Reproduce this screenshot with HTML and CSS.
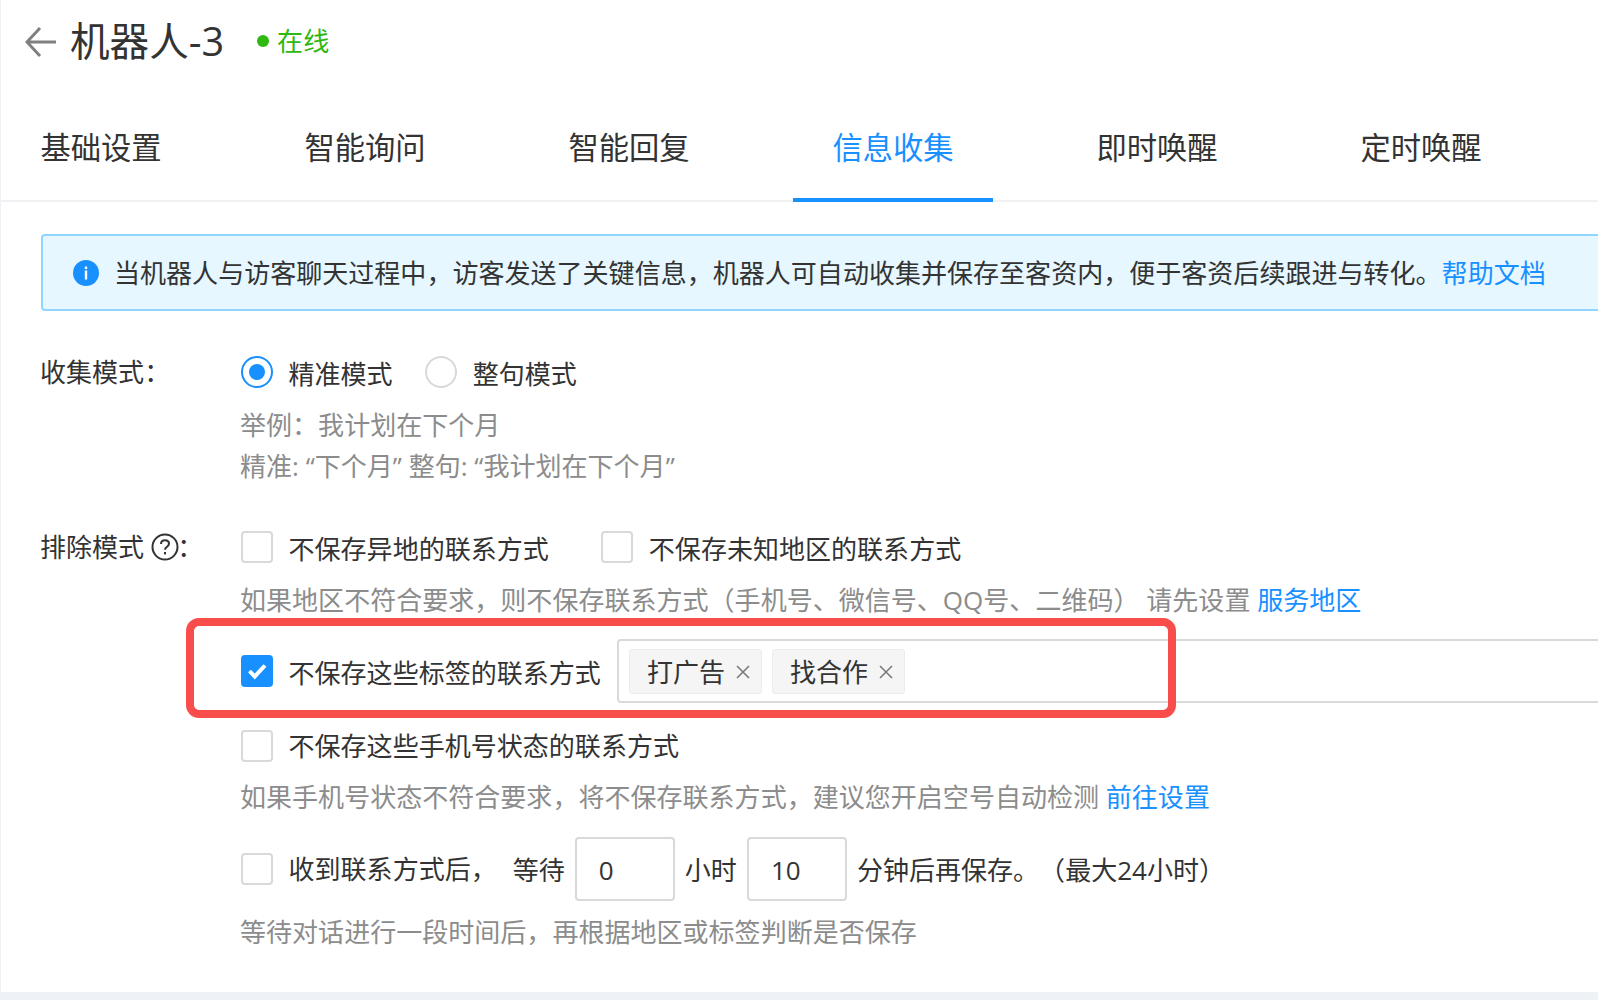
FILE: index.html
```html
<!DOCTYPE html>
<html lang="zh-CN">
<head>
<meta charset="utf-8">
<title>机器人-3</title>
<link rel="stylesheet" href="styles.css">
</head>
<body>
<div class="panel">
  <header class="head">
    <svg class="back" viewBox="0 0 32 32" width="32" height="32"><path d="M31 16H2M15 2 2 16l13 14" fill="none" stroke="#808080" stroke-width="3"/></svg>
    <h1 class="title">机器人-3</h1>
    <span class="status"><i class="dot"></i>在线</span>
  </header>
  <nav class="tabs">
    <a class="tab">基础设置</a>
    <a class="tab">智能询问</a>
    <a class="tab">智能回复</a>
    <a class="tab active">信息收集</a>
    <a class="tab">即时唤醒</a>
    <a class="tab">定时唤醒</a>
  </nav>
  <main class="body">
    <div class="alert">
      <svg class="info" viewBox="0 0 26 26" width="26" height="26"><circle cx="13" cy="13" r="13" fill="#1890ff"/><rect x="11.8" y="6.5" width="2.4" height="2.6" fill="#fff"/><rect x="11.8" y="10.5" width="2.4" height="9" fill="#fff"/></svg>
      <span>当机器人与访客聊天过程中，访客发送了关键信息，机器人可自动收集并保存至客资内，便于客资后续跟进与转化。<a class="link">帮助文档</a></span>
    </div>

    <section class="field first">
      <div class="label">收集模式：</div>
      <div class="content">
        <div class="line">
          <label class="opt low"><i class="radio on"></i>精准模式</label>
          <label class="opt low"><i class="radio"></i>整句模式</label>
        </div>
        <p class="hint hint-first">举例：我计划在下个月</p>
        <p class="hint">精准: “下个月” 整句: “我计划在下个月”</p>
      </div>
    </section>

    <section class="field second">
      <div class="label">排除模式
        <svg class="help" viewBox="0 0 28 28" width="28" height="28"><circle cx="14" cy="14" r="12.5" fill="none" stroke="#333" stroke-width="2"/><path d="M10 11c0-2.300 1.700-3.700 4-3.700s4 1.400 4 3.500c0 3-4 3-4 6" fill="none" stroke="#333" stroke-width="2"/><rect x="13" y="19" width="2" height="2.400" fill="#333"/></svg>：</div>
      <div class="content">
        <div class="line">
          <label class="opt low gap-wide"><i class="check"></i>不保存异地的联系方式</label>
          <label class="opt low"><i class="check"></i>不保存未知地区的联系方式</label>
        </div>
        <p class="hint hint-first">如果地区不符合要求，则不保存联系方式（手机号、微信号、QQ号、二维码） 请先设置 <a class="link">服务地区</a></p>
        <div class="line tag-line">
          <label class="opt low"><i class="check on"><svg viewBox="0 0 32 32" width="32" height="32"><path d="M8.500 16l5.200 5.500L24 10.500" fill="none" stroke="#fff" stroke-width="4"/></svg></i>不保存这些标签的联系方式</label>
          <div class="tag-input">
            <span class="tag">打广告<svg class="x" viewBox="0 0 14 14" width="14" height="14"><path d="M1 1l12 12M13 1 1 13" stroke="#777" stroke-width="1.500"/></svg></span>
            <span class="tag">找合作<svg class="x" viewBox="0 0 14 14" width="14" height="14"><path d="M1 1l12 12M13 1 1 13" stroke="#777" stroke-width="1.500"/></svg></span>
          </div>
        </div>
        <div class="line phone-line">
          <label class="opt"><i class="check"></i>不保存这些手机号状态的联系方式</label>
        </div>
        <p class="hint hint-phone">如果手机号状态不符合要求，将不保存联系方式，建议您开启空号自动检测 <a class="link">前往设置</a></p>
        <div class="line wait-line">
          <label class="opt"><i class="check"></i>收到联系方式后，</label>
          <span class="wait-text">等待</span>
          <input class="num" value="0">
          <span class="wait-text">小时</span>
          <input class="num" value="10">
          <span class="wait-text">分钟后再保存。（最大24小时）</span>
        </div>
        <p class="hint hint-last">等待对话进行一段时间后，再根据地区或标签判断是否保存</p>
      </div>
    </section>
  </main>
  <div class="callout"></div>
</div>
</body>
</html>
```
FILE: styles.css
```css
* { box-sizing: border-box; }
html, body { margin: 0; height: 100%; overflow: hidden; }
body {
  background: #eef1f5;
  color: #333;
  font-family: "Open Sans", "Noto Sans CJK SC", sans-serif;
  font-size: 26.04px;
  line-height: 32px;
}
.panel {
  position: relative;
  width: 1800px;
  height: 992px;
  margin-left: 1px;
  background: #fff;
  overflow: hidden;
}
.head { display: flex; align-items: center; height: 84px; padding-left: 24px; }
.back { flex: none; }
.title { margin: 0 0 2px 13px; font-size: 39.6px; line-height: 48px; font-weight: 400; }
.status { display: flex; align-items: center; margin: 0 0 2px 33px; color: #2fb80f; }
.dot { width: 12px; height: 12px; margin-right: 8px; border-radius: 50%; background: #2fb80f; }
.tabs { display: flex; gap: 64px; height: 118px; border-bottom: 2px solid #eff1f3; }
.tab { width: 200px; height: 118px; padding-top: 48px; text-align: center; font-size: 30.3px; line-height: 31px; }
.tab.active { color: #1890ff; border-bottom: 4px solid #1890ff; }
.link { color: #1890ff; }
.body { padding: 32px 0 0 40px; }
.alert {
  display: flex;
  align-items: center;
  gap: 15px;
  height: 77px;
  padding-left: 30px;
  border: 2px solid #91d5ff;
  border-radius: 4px;
  background: #e6f7ff;
}
.info { flex: none; }
.field { display: flex; }
.first { margin-top: 45px; }
.second { margin-top: 44px; }
.label { flex: none; display: flex; align-items: center; align-self: flex-start; width: 200px; height: 32px; margin-left: -1px; margin-right: 1px; }
.help { margin: 0 -2px 0 7px; }
.content { flex: 1; min-width: 0; }
.line { display: flex; align-items: center; }
.opt { display: flex; align-items: center; gap: 15.5px; margin-right: 32.5px; }
.opt.low { align-items: flex-start; height: 32px; line-height: 36px; }
.opt.gap-wide { margin-right: 52.5px; }
.radio, .check {
  flex: none;
  display: block;
  width: 32px;
  height: 32px;
  border: 2px solid #d9d9d9;
  background: #fff;
}
.radio { border-radius: 50%; }
.radio.on { border-color: #1890ff; padding: 6px; }
.radio.on::after { content: ""; display: block; width: 16px; height: 16px; border-radius: 50%; background: #1890ff; }
.check { border-radius: 4px; }
.check.on { border: 0; background: #1890ff; }
.check svg { display: block; }
.hint { margin: 0 0 0 -1px; color: #8c8c8c; line-height: 41px; }
.hint-first { margin-top: 17px; }
.hint-phone { margin-top: 15px; }
.hint-last { margin-top: 11px; }
.tag-line { margin-top: 18px; }
.tag-line .opt { margin-right: 16px; }
.tag-input {
  flex: 1;
  display: flex;
  align-items: center;
  gap: 10px;
  height: 64px;
  padding-left: 10px;
  border: 2px solid #d9d9d9;
  border-radius: 4px;
}
.tag {
  display: flex;
  align-items: center;
  gap: 11px;
  height: 45px;
  padding: 2px 11px 0 17px;
  border: 1px solid #ececec;
  border-radius: 3px;
  background: #f5f5f5;
}
.x { flex: none; }
.phone-line { margin-top: 27px; }
.wait-line { gap: 10px; margin-top: 19px; }
.wait-line .opt { margin-right: 6px; }
.wait-text { padding-top: 1px; text-spacing-trim: space-all; }
.num {
  width: 100px;
  height: 64px;
  padding: 2px 0 0 22px;
  border: 2px solid #d9d9d9;
  border-radius: 4px;
  color: #333;
  font: inherit;
  outline: none;
}
.callout {
  position: absolute;
  left: 185px;
  top: 618px;
  width: 990px;
  height: 100px;
  border: 8px solid #f84d4a;
  border-radius: 13px;
}
```
